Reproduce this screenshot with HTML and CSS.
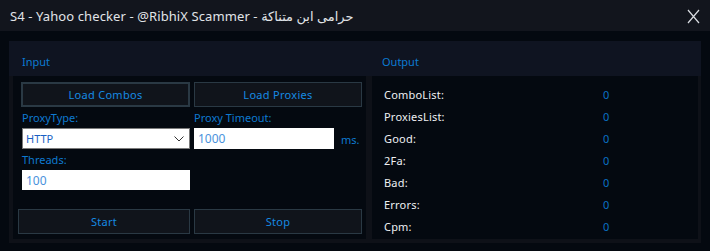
FILE: index.html
```html
<!DOCTYPE html>
<html>
<head>
<meta charset="utf-8">
<link rel="stylesheet" href="styles.css">
</head>
<body>
<div class="titlebar">
  <div class="title">S4 - Yahoo checker - @RibhiX Scammer - <span class="ar" dir="rtl">حرامى ابن متناكة</span></div>
  <svg class="close" width="13" height="15" viewBox="0 0 13 15"><path d="M1 1 L12 14 M12 1 L1 14" stroke="#d8dbe0" stroke-width="1.2" fill="none"/></svg>
</div>
<div class="main">
  <div class="group group-in">
    <div class="group-head">Input</div>
    <div class="group-body in-body">
      <div class="row-load">
        <button class="btn btn-focus">Load Combos</button>
        <button class="btn">Load Proxies</button>
      </div>
      <div class="row-fields">
        <div class="field">
          <div class="lbl">ProxyType:</div>
          <div class="select"><span>HTTP</span>
            <svg width="10" height="6" viewBox="0 0 10 6"><path d="M0.5 0.5 L5 5 L9.5 0.5" stroke="#333" stroke-width="1" fill="none"/></svg>
          </div>
        </div>
        <div class="field">
          <div class="lbl">Proxy Timeout:</div>
          <div class="tb-row"><div class="textbox tb-timeout">1000</div><span class="ms">ms.</span></div>
        </div>
      </div>
      <div class="field threads">
        <div class="lbl">Threads:</div>
        <div class="textbox tb-threads">100</div>
      </div>
      <div class="row-actions">
        <button class="btn">Start</button>
        <button class="btn">Stop</button>
      </div>
    </div>
  </div>
  <div class="group group-out">
    <div class="group-head">Output</div>
    <div class="group-body out-body">
      <div class="stat"><span class="k">ComboList:</span><span class="v">0</span></div>
      <div class="stat"><span class="k">ProxiesList:</span><span class="v">0</span></div>
      <div class="stat"><span class="k">Good:</span><span class="v">0</span></div>
      <div class="stat"><span class="k">2Fa:</span><span class="v">0</span></div>
      <div class="stat"><span class="k">Bad:</span><span class="v">0</span></div>
      <div class="stat"><span class="k">Errors:</span><span class="v">0</span></div>
      <div class="stat"><span class="k">Cpm:</span><span class="v">0</span></div>
    </div>
  </div>
</div>
</body>
</html>
```
FILE: styles.css
```css
* { box-sizing: border-box; }
html, body { margin: 0; padding: 0; }
body {
  width: 710px;
  height: 251px;
  background: #040910;
  font-family: "Noto Sans", "Open Sans", sans-serif;
  font-size: 11px;
  overflow: hidden;
}
.titlebar {
  height: 31px;
  background: #12151d;
  display: flex;
  align-items: center;
  justify-content: space-between;
  padding: 0 10px 0 10px;
}
.title {
  color: #e1e4e8;
  font-size: 13px;
  letter-spacing: 0.1px;
}
.ar { font-family: "Noto Sans", "DejaVu Sans", sans-serif; }
.close { display: block; margin-top: 1px; }
.main {
  display: flex;
  padding: 10px 0 0 9px;
}
.group {
  background: #0e1118;
  display: flex;
  flex-direction: column;
  height: 202px;
  padding-bottom: 4px;
}
.group-in { width: 360px; padding-left: 4px; padding-right: 3px; }
.group-out { width: 332px; padding-left: 3px; padding-right: 3px; }
.group-head {
  height: 35px;
  background: #0f1421;
  color: #0c7bd3;
  line-height: 41px;
  margin: 0 -3px 0 -4px;
  padding-left: 13px;
  font-size: 11px;
  overflow: hidden;
}
.group-out .group-head { margin: 0 -3px; padding-left: 13px; }
.group-body {
  flex: 1;
  background: #040910;
}
.in-body { padding-top: 6px; }
.btn {
  display: block;
  height: 25px;
  background: #10141b;
  border: 1px solid #2a3944;
  color: #168ae2;
  font-family: inherit;
  font-size: 11px;
  padding: 0;
  letter-spacing: 0.3px;
}
.btn-focus { border: 2px solid #2a3944; }
.row-load {
  display: grid;
  grid-template-columns: 169px 168px;
  column-gap: 4px;
  margin-left: 8px;
}
.row-fields {
  display: grid;
  grid-template-columns: 168px 170px;
  column-gap: 4px;
  margin-left: 9px;
  margin-top: 3px;
}
.lbl {
  color: #0e7ad1;
  line-height: 16px;
  height: 16px;
  margin-bottom: 2px;
}
.select {
  height: 21px;
  background: #ffffff;
  border: 1px solid #7b7b7b;
  display: flex;
  align-items: center;
  justify-content: space-between;
  padding: 0 5px 0 3px;
  color: #1a5fc4;
}
.tb-row { display: flex; align-items: center; }
.textbox {
  background: #ffffff;
  color: #4a92dc;
  padding-left: 4px;
  font-size: 12px;
  display: flex;
  align-items: center;
}
.tb-timeout { width: 140px; height: 21px; }
.ms { color: #0e7ad1; margin-left: 7px; margin-top: 2px; }
.threads { margin-left: 9px; margin-top: 3px; }
.threads .lbl { margin-bottom: 2px; }
.tb-threads { width: 168px; height: 20px; }
.row-actions {
  display: grid;
  grid-template-columns: 172px 168px;
  column-gap: 4px;
  margin-left: 5px;
  margin-top: 19px;
}
.out-body { padding: 7px 0 0 12px; }
.stat {
  display: flex;
  height: 22px;
  align-items: center;
}
.k { width: 219px; color: #eef0f3; font-weight: 400; letter-spacing: 0.2px; }
.v { color: #0a72c6; }
```
